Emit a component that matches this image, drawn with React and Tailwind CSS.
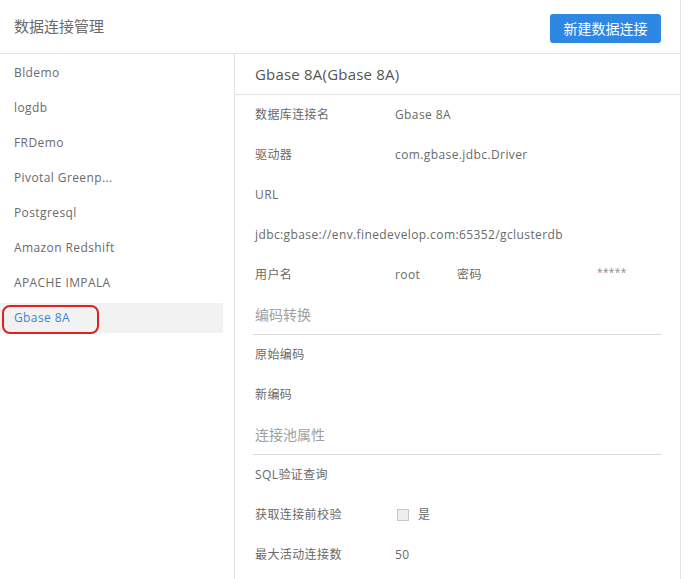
import React from "react";

const FONT = { fontFamily: '"Open Sans", "Noto Sans CJK SC", sans-serif' };

const sources = [
  "Bldemo",
  "logdb",
  "FRDemo",
  "Pivotal Greenp...",
  "Postgresql",
  "Amazon Redshift",
  "APACHE IMPALA",
  "Gbase 8A",
];

const Row = ({ label, children }) => (
  <div className="h-[40px] flex items-center px-[20px] text-[12px] text-[#6a6a6a] tracking-[0.4px]">
    <span className="w-[140px] shrink-0">{label}</span>
    {children}
  </div>
);

const Section = ({ title }) => (
  <div className="h-[40px] mx-[18px] px-[2px] flex items-center border-b border-[#dcdcdc] text-[14px] text-[#a0a0a0]">
    {title}
  </div>
);

export default function App() {
  return (
    <div style={FONT} className="w-[681px] min-h-[579px] bg-white border-r border-[#e3e3e3] flex flex-col">
      {/* header */}
      <div className="h-[54px] shrink-0 flex items-center justify-between pl-[14px] pr-[19px] border-b border-[#e3e3e3]">
        <h1 className="text-[15px] text-[#6a6a6a] font-normal">数据连接管理</h1>
        <button className="w-[111px] h-[29px] mt-[3px] rounded-[3px] bg-[#2f87e4] text-white text-[14px]">
          新建数据连接
        </button>
      </div>

      <div className="flex flex-1">
        {/* source list */}
        <div className="w-[235px] shrink-0 border-r border-[#e3e3e3] pt-[4px] pr-[11px]">
          {sources.map((name) => {
            const active = name === "Gbase 8A";
            return (
              <div
                key={name}
                className={`relative h-[30px] mb-[5px] flex items-center pl-[14px] text-[12px] tracking-[0.4px] ${
                  active ? "bg-[#f2f2f2] text-[#3d82d6]" : "text-[#6a6a6a]"
                }`}
              >
                {name}
                {active && (
                  <div className="absolute left-[2px] top-[2px] w-[97px] h-[29px] rounded-[8px] border-2 border-[#e0211f]" />
                )}
              </div>
            );
          })}
        </div>

        {/* detail */}
        <div className="flex-1">
          <div className="h-[41px] flex items-center pl-[20px] border-b border-[#e3e3e3] text-[15px] text-[#555] tracking-[0.2px]">
            Gbase 8A(Gbase 8A)
          </div>
          <Row label="数据库连接名">Gbase 8A</Row>
          <Row label="驱动器">com.gbase.jdbc.Driver</Row>
          <Row label="URL" />
          <div className="h-[40px] flex items-center px-[20px] text-[12px] text-[#6a6a6a] tracking-[0.4px]">
            jdbc:gbase://env.finedevelop.com:65352/gclusterdb
          </div>
          <Row label="用户名">
            <span className="w-[62px] shrink-0">root</span>
            <span className="w-[140px] shrink-0">密码</span>
            <span className="text-[10px] text-[#888] -mt-[6px]">*****</span>
          </Row>
          <Section title="编码转换" />
          <Row label="原始编码" />
          <Row label="新编码" />
          <Section title="连接池属性" />
          <Row label="SQL验证查询" />
          <Row label="获取连接前校验">
            <span className="w-[12px] h-[12px] ml-[2px] border border-[#c8c8c8] bg-[#eeeeee]" />
            <span className="ml-[9px]">是</span>
          </Row>
          <Row label="最大活动连接数">50</Row>
        </div>
      </div>
    </div>
  );
}
